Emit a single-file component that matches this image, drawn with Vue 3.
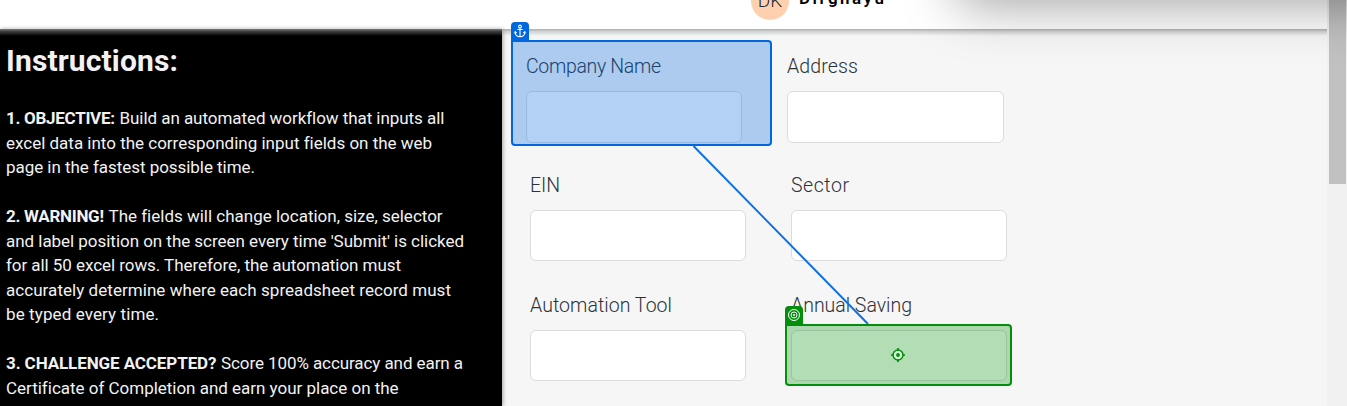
<script setup>
const heading = { text: 'Instructions:', width: 172 }

const lines = [
  [{ text: '1. OBJECTIVE:', width: 109, bold: true }, { text: 'Build an automated workflow that inputs all', width: 324.5 }],
  [{ text: 'excel data into the corresponding input fields on the web', width: 425.5 }],
  [{ text: 'page in the fastest possible time.', width: 249 }],
  [],
  [{ text: '2. WARNING!', width: 98, bold: true }, { text: 'The fields will change location, size, selector', width: 333.5 }],
  [{ text: "and label position on the screen every time 'Submit' is clicked", width: 458 }],
  [{ text: 'for all 50 excel rows. Therefore, the automation must', width: 395 }],
  [{ text: 'accurately determine where each spreadsheet record must', width: 445 }],
  [{ text: 'be typed every time.', width: 153 }],
  [],
  [{ text: '3. CHALLENGE ACCEPTED?', width: 210.5, bold: true }, { text: 'Score 100% accuracy and earn a', width: 242 }],
  [{ text: 'Certificate of Completion and earn your place on the', width: 392 }],
]

const rows = [
  [{ text: 'Company Name', width: 135 }, { text: 'Address', width: 71 }],
  [{ text: 'EIN', width: 30 }, { text: 'Sector', width: 58 }],
  [{ text: 'Automation Tool', width: 142 }, { text: 'Annual Saving', width: 121 }],
]

// Adjusts tracking so that a text run fills its set measure.
const vFit = {
  mounted(el, { value }) {
    const natural = el.getBoundingClientRect().width
    const count = el.textContent.length
    el.style.letterSpacing = `${(value - natural) / (count - 1)}px`
    el.style.marginRight = `${-(value - natural) / (count - 1)}px`
  },
}
</script>

<template>
  <div class="page">
    <header class="header">
      <div class="avatar"><span>DK</span></div>
      <div class="user"><span v-fit="85">Dirghayu</span></div>
    </header>

    <main class="body">
      <section class="instructions">
        <h1><span v-fit="heading.width">{{ heading.text }}</span></h1>
        <div v-for="(line, i) in lines" :key="i" class="line">
          <span v-for="seg in line" :key="seg.text" v-fit="seg.width" :class="{ bold: seg.bold }">{{ seg.text }}</span>
        </div>
      </section>

      <section class="form">
        <div v-for="(row, i) in rows" :key="i" class="row" :class="'row-' + (i + 1)">
          <div v-for="field in row" :key="field.text" class="field">
            <label><span v-fit="field.width">{{ field.text }}</span></label>
            <div class="input"></div>
          </div>
        </div>
      </section>
    </main>

    <div class="header-shadow"></div>
    <div class="scroll">
      <div class="thumb"></div>
    </div>
    <div class="window-shadow"></div>

    <svg class="connector" width="1347" height="406" viewBox="0 0 1347 406">
      <line x1="693.5" y1="146" x2="868" y2="324" stroke="#0f70e2" stroke-width="2" />
    </svg>

    <div class="anchor-box"></div>
    <div class="tab anchor-tab">
      <svg width="18" height="18" viewBox="0 0 18 18" fill="none" stroke="#fff" stroke-width="1.1">
        <circle cx="9" cy="4.5" r="1.4" />
        <path d="M9 6v8.7M6.3 7.5h5.4M4.1 10.2c.2 2.8 2 4.4 4.9 4.6 2.9-.2 4.7-1.8 4.9-4.6M3.6 11.5l.6-1.7 1.4 1.2M14.4 11.5l-.6-1.7-1.4 1.2" />
      </svg>
    </div>

    <div class="target-box"></div>
    <div class="tab target-tab">
      <svg width="18" height="18" viewBox="0 0 18 18" fill="none" stroke="#fff">
        <circle cx="9" cy="9" r="5.5" />
        <circle cx="9" cy="9" r="3" />
        <circle cx="9" cy="9" r="1" fill="#fff" stroke="none" />
      </svg>
    </div>
    <svg class="crosshair" width="16" height="16" viewBox="0 0 16 16">
      <circle cx="8" cy="8" r="5" fill="#d7efd7" stroke="#038e0b" stroke-width="1.5" />
      <circle cx="8" cy="8" r="1.9" fill="#038e0b" />
      <path d="M8 1v2.5M8 12.5v2.5M1 8h2.5M12.5 8h2.5" stroke="#038e0b" stroke-width="1.7" />
    </svg>
  </div>
</template>

<style>
body {
  margin: 0;
  overflow: hidden;
}
</style>

<style scoped>
* {
  box-sizing: border-box;
}
.page {
  position: relative;
  width: 1347px;
  height: 406px;
  overflow: hidden;
  background: #f6f6f6;
  font-family: Roboto, "Liberation Sans", sans-serif;
}
.page span {
  display: inline-block;
  white-space: nowrap;
}
.header {
  display: flex;
  align-items: flex-end;
  width: 1327px;
  height: 29px;
  padding: 0 0 9px 751px;
  background: #fff;
}
.avatar {
  display: flex;
  flex: none;
  align-items: center;
  justify-content: center;
  width: 38px;
  height: 38px;
  padding-bottom: 2px;
  border-radius: 50%;
  background: #ffd0b0;
  color: #1c2930;
  font-size: 19px;
  font-weight: 300;
}
.user {
  margin-left: 10px;
  height: 32px;
  line-height: 20px;
  font-size: 17px;
  font-weight: 600;
  color: #000;
}
.body {
  display: flex;
  width: 1327px;
  height: 377px;
}
.instructions {
  flex: none;
  width: 502px;
  padding: 13px 0 0 6px;
  background: #000;
  color: #f2f2f2;
  box-shadow: 1px 0 4px rgba(0, 0, 0, 0.35);
}
h1 {
  height: 64px;
  margin: 0;
  font-size: 30px;
  font-weight: 700;
  line-height: 38px;
}
.line {
  display: flex;
  gap: 4.5px;
  height: 24.5px;
  font-size: 17px;
  line-height: 24.5px;
}
.bold {
  font-weight: 700;
}
.form {
  padding: 24px 0 0 28px;
}
.row {
  display: flex;
  gap: 45px;
  height: 120px;
}
.row-1 {
  height: 119px;
  margin-left: -4px;
}
.field {
  width: 216px;
}
.row-1 .field:last-child {
  width: 217px;
}
label {
  display: block;
  height: 38px;
  line-height: 27px;
  font-size: 19.5px;
  font-weight: 300;
  color: #2b3238;
}
.input {
  height: 51px;
  border: 1px solid #dcdcdc;
  border-radius: 6px;
  background: #fff;
}
.row-1 .input {
  height: 52px;
}
.header-shadow {
  position: absolute;
  top: 29px;
  left: 0;
  width: 1327px;
  height: 7px;
  background: linear-gradient(rgba(150, 157, 154, 0.8), rgba(150, 157, 154, 0.4) 35%, rgba(150, 157, 154, 0));
}
.scroll {
  position: absolute;
  top: 0;
  right: 0;
  width: 20px;
  height: 406px;
  padding: 0 1px 0 2px;
  background: #f1f1f1;
}
.thumb {
  height: 184px;
  background: #c1c1c1;
}
.window-shadow {
  position: absolute;
  top: -100px;
  left: 958px;
  width: 600px;
  height: 100px;
  box-shadow: 0 4px 54px rgba(0, 0, 0, 0.38);
}
.connector {
  position: absolute;
  top: 0;
  left: 0;
}
.anchor-box {
  position: absolute;
  top: 40px;
  left: 511px;
  width: 261px;
  height: 106px;
  border: 2px solid #0067df;
  border-radius: 0 4px 4px 4px;
  background: rgba(0, 103, 223, 0.3);
}
.target-box {
  position: absolute;
  top: 324px;
  left: 785px;
  width: 227px;
  height: 62px;
  border: 2px solid #038e0b;
  border-radius: 0 4px 4px 4px;
  background: rgba(3, 142, 11, 0.3);
}
.tab {
  position: absolute;
  width: 18px;
  height: 19px;
  border-radius: 4px 4px 0 0;
}
.tab svg {
  display: block;
}
.anchor-tab {
  top: 22px;
  left: 511px;
  background: #0067df;
}
.target-tab {
  top: 306px;
  left: 785px;
  background: #038e0b;
}
.crosshair {
  position: absolute;
  top: 347px;
  left: 890px;
}
</style>
